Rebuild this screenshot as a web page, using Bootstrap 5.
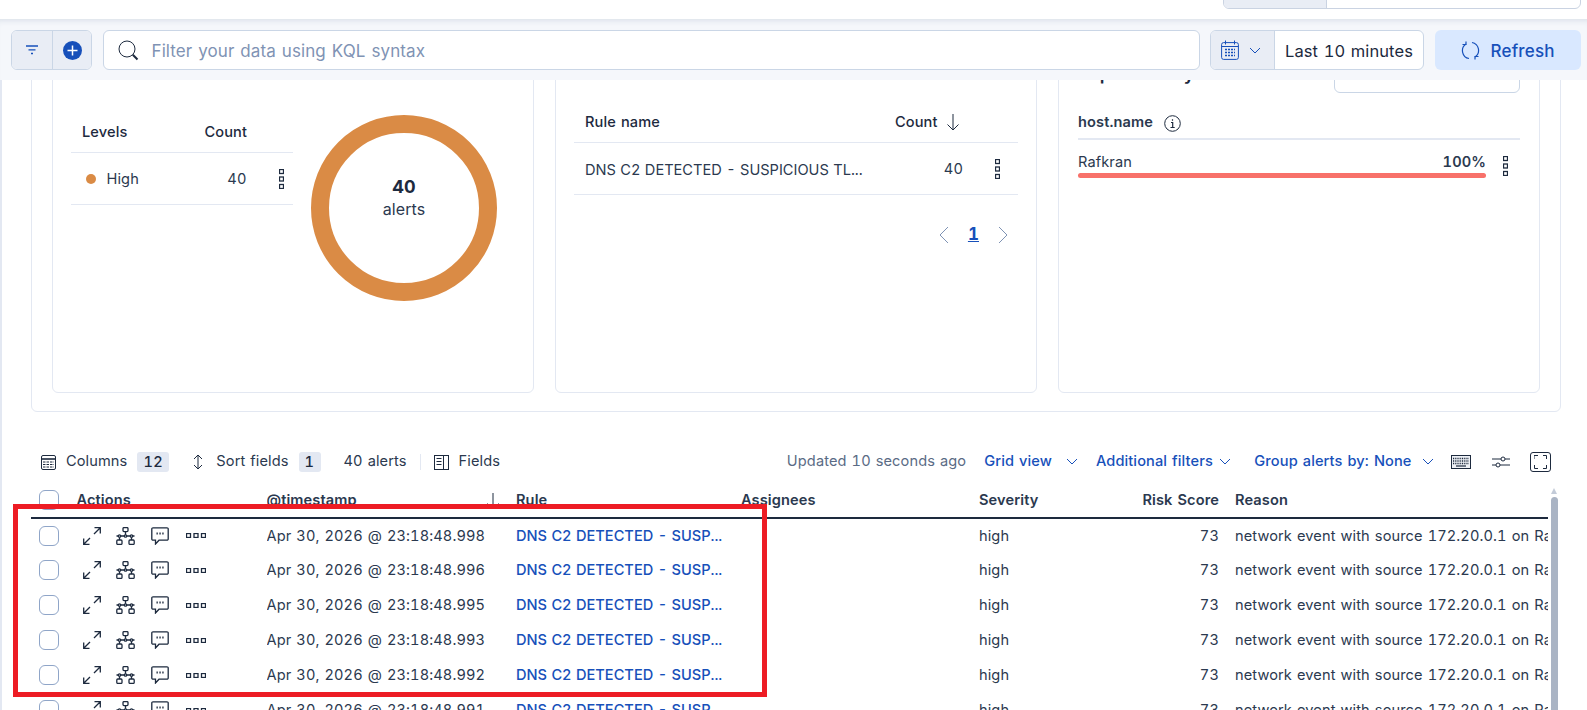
<!doctype html>
<html lang="en">
  <head>
    <meta charset="UTF-8" />
    <meta name="viewport" content="width=device-width, initial-scale=1" />
    <title>Alerts</title>
    <link
      href="https://cdn.jsdelivr.net/npm/bootstrap@5.3.0/dist/css/bootstrap.min.css"
      rel="stylesheet"
    />
    <style>
      html, body { height: 100%; overflow: hidden; }
      body { font-family: "Inter", sans-serif; font-size: 14.6px; color: #2b394f; background: #fff; letter-spacing: .1px; word-spacing: 1px; font-variant-numeric: tabular-nums; }
      svg { display: block; flex: none; }
      .ico { fill: none; stroke: #1d2a3e; stroke-width: 1; }
      .ico-blue { fill: none; stroke: #1750ba; stroke-width: 1; }
      .ico-bold { stroke-width: 1.3; }

      .top-strip { height: 19px; position: relative; }
      .seg-top { position: absolute; left: 1223px; width: 358px; top: -10px; height: 19px; border: 1px solid #cad3e2; border-radius: 6px; overflow: hidden; background: #fff; }
      .seg-top span { display: block; width: 103px; height: 100%; background: #e9edf5; border-right: 1px solid #cad3e2; }

      .filter-bar { height: 61px; padding: 11px 6px 10px 11px; background: #f5f7fb; box-shadow: inset 0 6px 6px -5px #d5dbe5; position: relative; z-index: 2; gap: 10.5px; }
      .seg-box { height: 40px; border: 1px solid #cad6e6; border-radius: 6px; background: #fff; overflow: hidden; }
      .seg-part { height: 100%; background: #e9edf5; border-right: 1px solid #cad6e6; }
      .seg-tail { height: 100%; background: #e9edf5; }
      .query-box { flex: 1; padding-left: 14px; gap: 13px; }
      .query-box input { border: 0; outline: 0; flex: 1; font-size: 17px; color: #2b394f; background: transparent; padding: 3px 0 0; letter-spacing: .1px; word-spacing: 1px; }
      .query-box input::placeholder { color: #7f93b4; opacity: 1; }
      .time-label { padding: 2px 10px 0; font-size: 16.5px; color: #1d2a3e; }
      .refresh-btn { width: 146.5px; height: 40px; background: #d9e8ff; border: 0; border-radius: 6px; color: #1750ba; font-size: 17px; font-weight: 500; gap: 11px; padding: 0 0 0 26px; letter-spacing: .2px; }
      .refresh-btn span { padding-top: 3px; }

      .page-body { margin-top: -60px; border-left: 2px solid #e3e8f2; height: 800px; }
      .outer-panel { margin-left: 29px; width: 1530px; height: 392px; padding: 20px 20px 20px 20px; border: 1px solid #e3e8f2; border-radius: 6px; gap: 21px; }
      .chart-card { height: 352px; flex: 0 0 482px; border: 1px solid #e3e8f2; border-radius: 6px; position: relative; }
      .levels-card { padding: 69px 0 0 18px; }
      .rules-card { padding: 59px 18px 0 18px; }
      .hosts-card { padding: 11px 19px 0 19px; }
      .mini-head { height: 42px; border-bottom: 1px solid #e3e8f2; font-weight: 500; color: #1d2a3e; }
      .mini-row { height: 52px; border-bottom: 1px solid #e3e8f2; }
      .mini-head span, .mini-row span { padding-top: 2px; }
      .levels-table { width: 222px; }
      .lvl-name { width: 35px; margin-left: 10.5px; }
      .lvl-dot { width: 10px; height: 10px; border-radius: 50%; background: #da8b45; margin-left: 15px; }
      .donut { width: 186px; height: 186px; margin: 4px 0 0 18px; border: 18.5px solid #da8b45; border-radius: 50%; text-align: center; line-height: 1.2; padding-top: 43px; font-size: 16px; }
      .donut strong { display: block; font-size: 18px; font-weight: 700; color: #1d2a3e; margin-bottom: 2px; }
      .page-num { color: #1750ba; font-weight: 700; font-size: 17px; text-decoration: underline; }
      .rule-cell { padding-left: 11px; width: 321px; }
      .mini-row .rule-cell { letter-spacing: 0; word-spacing: .5px; padding-top: 4px; }
      .pager { margin-top: 30px; padding-right: 9px; gap: 19px; height: 20px; }
      .title-row { height: 62px; }
      .hosts-title { font-size: 18px; font-weight: 600; color: #1d2a3e; margin-top: 7px; }
      .hosts-select { width: 186px; height: 40px; margin-left: auto; border: 1px solid #cad6e6; border-radius: 6px; }
      .host-head { height: 16px; font-weight: 600; gap: 11px; color: #2b394f; margin-top: 0; }
      .host-rule { height: 2px; background: #e3e8f2; margin-top: 7px; }
      .host-row { width: 408px; margin-top: 12px; }
      .host-bar { height: 5px; width: 408px; border-radius: 3px; background: #f8716a; margin-top: -1px; }
      .host-menu { position: absolute; left: 444px; top: 114px; }
      .pct { font-weight: 600; }

      .grid-tools { margin: 35px 36px 0 39px; height: 30px; }
      .count-chip { background: #e3e8f2; border-radius: 3px; height: 20px; line-height: 20px; padding: 0 6px; font-weight: 500; color: #1d2a3e; letter-spacing: .5px; }
      .sep-line { width: 1px; height: 16px; background: #e3e8f2; }
      .blue-link { color: #1750ba; font-weight: 500; gap: 10px; }
      .grid-wrap { margin: 6px 0 0 29px; width: 1517px; position: relative; }
      .alert-table { table-layout: fixed; width: 1517px; border-collapse: collapse; }
      .alert-table th { height: 34.5px; font-weight: 600; color: #2b394f; border-bottom: 2px solid #1d2a3e; padding: 2px 0 0; white-space: nowrap; overflow: hidden; }
      .alert-table td { height: 35px; padding: 2px 0 0; white-space: nowrap; overflow: hidden; }
      .rule-link { color: #1750ba; font-weight: 500; letter-spacing: 0; word-spacing: .5px; }
      .check-box { width: 20px; height: 20px; margin-left: 8px; border: 1px solid #8fa5c8; border-radius: 6px; background: #fff; }
      .act-cell { gap: 15.5px; padding-left: 6px; }
      .red-frame { position: absolute; left: 13px; top: 504px; width: 754px; height: 193px; border: 5px solid #ed1c24; z-index: 3; pointer-events: none; }
      .scroll-thumb { position: absolute; left: 1551px; top: 497px; width: 7px; height: 240px; border-radius: 4px; background: #aab4c4; }
      .scroll-arrow { position: absolute; left: 1551px; top: 485px; width: 0; height: 0; border: 3.5px solid transparent; border-bottom: 6px solid #c3cbd8; }
    </style>
  </head>
  <body>
    <svg width="0" height="0" style="position:absolute">
      <symbol id="i-expand" viewBox="0 0 18 18"><path d="M.7 17.300 7 11M.7 11.500v5.800h5.800M11 7l6.300-6.300M11.500 .7h5.800v5.800"/></symbol>
      <symbol id="i-net" viewBox="0 0 19 18"><rect x="7" y=".6" width="5" height="4" rx="1"/><path d="M9.500 4.600V8M.5 9h18M3.500 9v4M15.500 9v4"/><circle cx="3.500" cy="9" r="1.200" fill="#fff"/><circle cx="9.500" cy="9" r="1.200" fill="#fff"/><circle cx="15.500" cy="9" r="1.200" fill="#fff"/><rect x=".8" y="13" width="5.200" height="4.400" rx="1"/><rect x="13" y="13" width="5.200" height="4.400" rx="1"/></symbol>
      <symbol id="i-chat" viewBox="0 0 18 18"><path d="M2 .8h14a1.200 1.200 0 0 1 1.200 1.200v10a1.200 1.200 0 0 1-1.200 1.200H8L4.500 17v-3.800H2A1.200 1.200 0 0 1 .8 12V2A1.200 1.200 0 0 1 2 .8Z"/><path d="M5.500 6.500h1.300M8.400 6.500h1.300M11.300 6.500h1.300" stroke-width="1.800"/></symbol>
      <symbol id="i-dots" viewBox="0 0 20 5"><rect x=".5" y=".5" width="4" height="4"/><rect x="8" y=".5" width="4" height="4"/><rect x="15.500" y=".5" width="4" height="4"/></symbol>
      <symbol id="i-vdots" viewBox="0 0 5 20"><rect x=".5" y=".5" width="4" height="4"/><rect x=".5" y="8" width="4" height="4"/><rect x=".5" y="15.500" width="4" height="4"/></symbol>
      <symbol id="i-caret" viewBox="0 0 12 7"><path d="M1 1l5 5 5-5"/></symbol>
      <symbol id="i-down" viewBox="0 0 14 18"><path d="M7 1v16M1.500 11.500 7 17l5.500-5.500"/></symbol>
    </svg>

    <div class="top-strip"><div class="seg-top"><span></span></div></div>

    <div class="filter-bar d-flex align-items-start">
      <div class="seg-box d-flex" style="width:81px">
        <div class="seg-part d-flex align-items-center justify-content-center" style="width:41px">
          <svg class="ico-blue" width="14" height="10" viewBox="0 0 14 10"><path d="M1 1h12M3.500 4.800h7M6 8.500h2" stroke-width="1.300"/></svg>
        </div>
        <div class="seg-tail d-flex align-items-center justify-content-center flex-fill">
          <svg width="19" height="19" viewBox="0 0 19 19"><circle cx="9.500" cy="9.500" r="9.500" fill="#1750ba"/><path d="M9.500 4.500v10M4.500 9.500h10" stroke="#fff" stroke-width="1.500"/></svg>
        </div>
      </div>
      <div class="seg-box query-box d-flex align-items-center">
        <svg class="ico" width="21" height="21" viewBox="0 0 21 21"><circle cx="9" cy="9" r="8"/><path d="M14.800 14.800 19.500 19.500" stroke-width="2"/></svg>
        <input type="text" placeholder="Filter your data using KQL syntax" />
      </div>
      <div class="seg-box d-flex align-items-center" style="width:214px">
        <div class="seg-part d-flex align-items-center" style="width:64px;padding-left:10px;gap:10px">
          <svg class="ico-blue" width="18" height="20" viewBox="0 0 18 20"><rect x=".6" y="2.600" width="16.800" height="16.800" rx="2"/><path d="M.6 6.500h16.800M4.500 .5v4M13.500 .5v4"/><path d="M4 9.500h10M4 12.500h10M4 15.500h10" stroke-width="1.500" stroke-dasharray="2 1"/></svg>
          <svg class="ico-blue" width="12" height="7"><use href="#i-caret"/></svg>
        </div>
        <div class="time-label text-nowrap">Last 10 minutes</div>
      </div>
      <button class="refresh-btn btn d-flex align-items-center" type="button">
        <svg class="ico-blue" width="19" height="19" viewBox="0 0 19 19" style="stroke-width:1.200"><path d="M8 17.500A8 8 0 0 1 5 3M11 1.500A8 8 0 0 1 14 16"/><path d="M5 .5V3.500H1.500M14 18.500V15.500H17.500"/></svg>
        <span>Refresh</span>
      </button>
    </div>

    <div class="page-body">
      <div class="outer-panel d-flex">
        <div class="chart-card levels-card d-flex">
          <div class="levels-table">
            <div class="mini-head d-flex align-items-center">
              <span style="padding-left:11px;width:90px">Levels</span>
              <span style="width:86px;text-align:right">Count</span>
            </div>
            <div class="mini-row d-flex align-items-center">
              <span class="lvl-dot"></span>
              <span class="lvl-name">High</span>
              <span style="width:105px;text-align:right">40</span>
              <svg class="ico ico-bold ms-auto" style="margin-right:9px" width="5" height="20"><use href="#i-vdots"/></svg>
            </div>
          </div>
          <div class="donut"><strong>40</strong>alerts</div>
        </div>

        <div class="chart-card rules-card">
          <div class="mini-head d-flex align-items-center">
            <span class="rule-cell">Rule name</span>
            <span>Count</span>
            <svg class="ico ms-2" width="14" height="18"><use href="#i-down"/></svg>
          </div>
          <div class="mini-row d-flex align-items-center">
            <span class="rule-cell text-nowrap">DNS C2 DETECTED - SUSPICIOUS TL...</span>
            <span style="width:68px;text-align:right">40</span>
            <svg class="ico ico-bold" style="margin-left:32px" width="5" height="20"><use href="#i-vdots"/></svg>
          </div>
          <div class="pager d-flex align-items-center justify-content-end">
            <svg width="11" height="18" viewBox="0 0 11 18" fill="none" stroke="#7f93b4"><path d="M10 1 2 9l8 8"/></svg>
            <span class="page-num">1</span>
            <svg width="11" height="18" viewBox="0 0 11 18" fill="none" stroke="#7f93b4"><path d="m1 1 8 8-8 8"/></svg>
          </div>
        </div>

        <div class="chart-card hosts-card">
          <div class="title-row d-flex align-items-start">
            <span class="hosts-title">Top alerts by</span>
            <div class="hosts-select"></div>
          </div>
          <div class="host-head d-flex align-items-center">
            host.name
            <svg class="ico" width="17" height="17" viewBox="0 0 17 17"><circle cx="8.500" cy="8.500" r="7.800"/><path d="M7 7.500h1.700v5M6.500 12.500h4.200M8.500 4.300v1.400" stroke-width="1.200"/></svg>
          </div>
          <div class="host-rule"></div>
          <div class="host-row d-flex justify-content-between"><span>Rafkran</span><span class="pct">100%</span></div>
          <div class="host-bar"></div>
          <svg class="ico ico-bold host-menu" width="5" height="20"><use href="#i-vdots"/></svg>
        </div>
      </div>

      <div class="grid-tools d-flex align-items-center">
        <svg class="ico" width="15" height="15" viewBox="0 0 15 15"><rect x=".5" y=".5" width="14" height="14" rx="1.500"/><path d="M.5 4h14" stroke-width="1.600"/><path d="M2 7h11M2 9.500h11M2 12h11" stroke-dasharray="2.500 1"/></svg>
        <span style="margin-left:10px">Columns</span>
        <span class="count-chip" style="margin-left:10px">12</span>
        <svg class="ico" style="margin-left:23px" width="12" height="16" viewBox="0 0 12 16"><path d="M6 2v12M2 5l4-4 4 4M2 11l4 4 4-4"/></svg>
        <span style="margin-left:12px">Sort fields</span>
        <span class="count-chip" style="margin-left:10px">1</span>
        <span style="margin-left:23px">40 alerts</span>
        <span class="sep-line" style="margin-left:13px"></span>
        <svg class="ico" style="margin-left:13px" width="15" height="15" viewBox="0 0 15 15"><rect x=".5" y=".5" width="14" height="14"/><path d="M9.500 .5v14M2.500 3.500h5M2.500 6.500h5M2.500 9.500h5"/></svg>
        <span style="margin-left:10px">Fields</span>

        <span class="ms-auto" style="color:#5a6b85">Updated 10 seconds ago</span>
        <span class="blue-link d-flex align-items-center" style="margin-left:18px">Grid view <svg class="ico-blue ms-1" width="12" height="7"><use href="#i-caret"/></svg></span>
        <span class="blue-link d-flex align-items-center" style="margin-left:18px;gap:6px">Additional filters <svg class="ico-blue" width="12" height="7"><use href="#i-caret"/></svg></span>
        <span class="blue-link d-flex align-items-center" style="margin-left:23.500px">Group alerts by: None <svg class="ico-blue" width="12" height="7"><use href="#i-caret"/></svg></span>
        <svg class="ico" style="margin-left:17px" width="20" height="14" viewBox="0 0 20 14"><rect x=".5" y=".5" width="19" height="13" fill="#eef1f6"/><path d="M2 3.500h16M2 6h16M2 8.500h16" stroke-width="1.400" stroke-dasharray="1 .8"/><path d="M5 11h10" stroke-width="1.200"/></svg>
        <svg class="ico" style="margin-left:21px" width="18" height="14" viewBox="0 0 18 14"><path d="M0 4h9M13 4h5M0 10h4M8 10h10"/><circle cx="11" cy="4" r="2"/><circle cx="6" cy="10" r="2"/></svg>
        <span style="margin-left:20.500px;border:1px solid #1d2a3e;border-radius:3px;padding:2px 3px">
          <svg class="ico" width="13" height="14" viewBox="0 0 13 14"><path d="M0 4V.5h4M9 .5h3.500V4M12.500 10v3.500H9M4 13.500H.5V10"/></svg>
        </span>
      </div>

      <div class="grid-wrap">
        <table class="alert-table">
          <colgroup>
            <col style="width:45.500px" /><col style="width:190px" /><col style="width:249.500px" /><col style="width:225px" />
            <col style="width:238px" /><col style="width:140px" /><col style="width:100px" /><col style="width:329px" />
          </colgroup>
          <thead>
            <tr>
              <th class="pt-0"><div class="check-box"></div></th>
              <th>Actions</th>
              <th>
                <div class="d-flex align-items-center justify-content-between" style="padding-right:16px"><span>@timestamp</span>
                <svg class="ico" width="14" height="18"><use href="#i-down"/></svg></div>
              </th>
              <th>Rule</th>
              <th>Assignees</th>
              <th>Severity</th>
              <th class="text-end">Risk Score</th>
              <th style="padding-left:16px">Reason</th>
            </tr>
          </thead>
          <tbody id="alertRows"></tbody>
        </table>
      </div>
    </div>

    <div class="red-frame"></div>
    <div class="scroll-arrow"></div>
    <div class="scroll-thumb"></div>

    <script>
      // alert rows, only the milliseconds differ
      const millis = ["998", "996", "995", "993", "992", "991", "990"]
      const rows = millis.map((ms) => `
        <tr>
          <td class="pt-0"><div class="check-box"></div></td>
          <td class="pt-0">
            <div class="act-cell d-flex align-items-center">
              <svg class="ico ico-bold" width="18" height="18"><use href="#i-expand"/></svg>
              <svg class="ico ico-bold" width="19" height="18"><use href="#i-net"/></svg>
              <svg class="ico ico-bold" width="18" height="18"><use href="#i-chat"/></svg>
              <svg class="ico ico-bold" style="margin-left:2px" width="20" height="5"><use href="#i-dots"/></svg>
            </div>
          </td>
          <td>Apr 30, 2026 @ 23:18:48.${ms}</td>
          <td><span class="rule-link">DNS C2 DETECTED - SUSP...</span></td>
          <td></td>
          <td>high</td>
          <td class="text-end">73</td>
          <td style="padding-left:16px">network event with source 172.20.0.1 on Ra</td>
        </tr>`)
      document.getElementById("alertRows").innerHTML = rows.join("")
    </script>
    <script src="https://cdn.jsdelivr.net/npm/bootstrap@5.3.0/dist/js/bootstrap.bundle.min.js"></script>
  </body>
</html>
